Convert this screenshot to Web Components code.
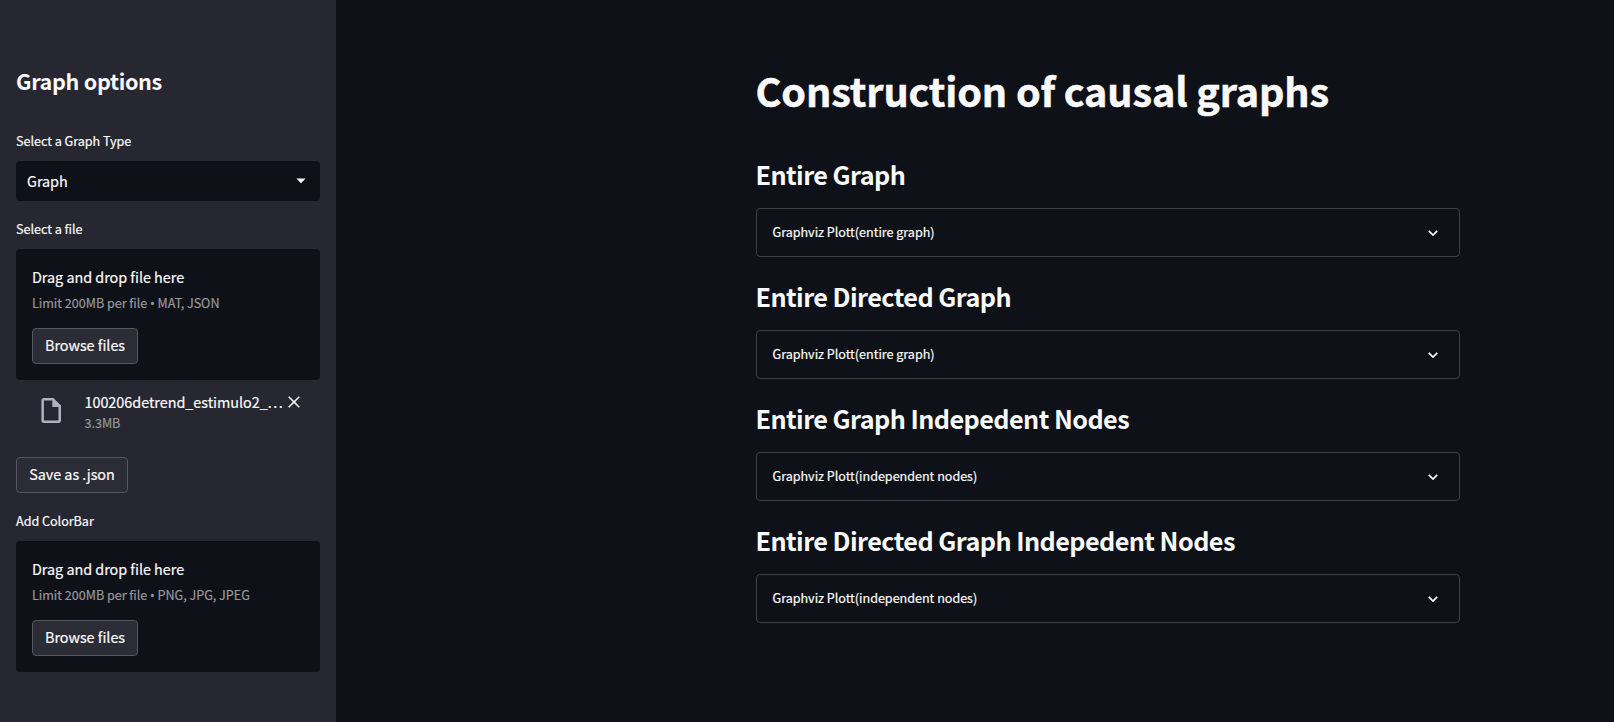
<!DOCTYPE html>
<html lang="en">
<head>
<meta charset="utf-8">
<title>Construction of causal graphs</title>
<style>
html, body { margin: 0; height: 100%; background: #0e1117; }
body { font-family: "Noto Sans CJK SC", "Noto Sans", sans-serif; color: #fafafa; overflow: hidden; letter-spacing: -0.03px; -webkit-text-stroke-width: 0.2px; }
</style>
</head>
<body>
<graph-app></graph-app>
<script>
const define = (name, html) => {
  const template = document.createElement('template');
  template.innerHTML = html;
  customElements.define(name, class extends HTMLElement {
    constructor() {
      super();
      this.attachShadow({ mode: 'open' }).append(template.content.cloneNode(true));
    }
  });
};

define('field-label', `
<style>
:host { display: block; height: 23px; margin-bottom: 9px; font-size: 12.6px; line-height: 23px; white-space: nowrap; }
</style><slot></slot>`);

define('select-box', `
<style>
:host { display: flex; align-items: center; justify-content: space-between; height: 40px; box-sizing: border-box;
  padding: 0 14px 0 11px; border-radius: 4px; background: #0e1117; font-size: 14.4px; line-height: 24px; }
svg { display: block; }
</style><span><slot></slot></span>
<svg width="10" height="6" viewBox="0 0 10 6"><path d="M0.4 0.5h9.2L5 5.3z" fill="#fafafa"/></svg>`);

define('plain-button', `
<style>
:host { display: flex; width: fit-content; }
button { all: unset; box-sizing: border-box; width: var(--w, auto); height: 36px; padding-bottom: 2px; text-align: center; border: 1px solid #55565e;
  border-radius: 4px; background: #2b2c36; color: #fafafa; font-size: 14.4px; line-height: 28px; white-space: nowrap; }
</style><button><slot></slot></button>`);

define('file-drop', `
<style>
:host { display: flex; flex-direction: column; height: 131px; box-sizing: border-box; padding: 16px; border-radius: 4px; background: #0e1117; white-space: nowrap; }
.title { font-size: 14.4px; line-height: 23px; height: 24px; }
.limit { font-size: 12.6px; line-height: 20px; height: 20px; margin: 4px 0 15px; color: #97989b; }
plain-button { --w: 106px; }
</style>
<div class="title">Drag and drop file here</div>
<div class="limit"><slot></slot></div>
<plain-button>Browse files</plain-button>`);

define('uploaded-file', `
<style>
:host { display: flex; align-items: flex-start; height: 44px; padding-left: 24px; white-space: nowrap; }
.doc { width: 20px; height: 25px; margin: 6px 24px 0 0.5px; }
.name { width: 199.5px; font-size: 14.4px; line-height: 20px; height: 21px; }
.size { font-size: 12.6px; line-height: 20px; color: #97989b; }
.close { margin: 4px 0 0 4px; }
svg { display: block; flex: none; }
</style>
<svg class="doc" viewBox="0 0 20 25"><path fill="#b0b2c3" fill-rule="evenodd" d="M3 0H12.4L20 7.6V22.2A2.6 2.6 0 0 1 17.4 25H3A2.7 2.7 0 0 1 .4 22.3V2.7A2.7 2.7 0 0 1 3 0ZM2.9 2.5V22.5H17.5V8.9H11.3V2.5Z"/></svg>
<div><div class="name"><slot></slot></div><div class="size"><slot name="size"></slot></div></div>
<svg class="close" width="12" height="12" viewBox="0 0 12 12"><path d="M.7.7 11.3 11.3M11.3.7.7 11.3" stroke="#fafafa" stroke-width="1.6"/></svg>`);

define('side-bar', `
<style>
:host { display: flex; flex-direction: column; width: 336px; box-sizing: border-box; padding: 64px 16px 0; background: #262730; flex: none; }
h2 { margin: 0 0 32px; height: 33px; font-size: 21.6px; line-height: 33px; font-weight: 600; letter-spacing: -0.32px; -webkit-text-stroke-width: 0; }
select-box { margin-bottom: 16px; }
uploaded-file { margin: 12px 0 21px; }
.save { --w: 112px; margin-bottom: 16px; }
.dot { font-family: "Noto Sans", sans-serif; }
.ellipsis { letter-spacing: 1.5px; }
</style>
<h2>Graph options</h2>
<field-label>Select a Graph Type</field-label>
<select-box>Graph</select-box>
<field-label>Select a file</field-label>
<file-drop>Limit 200MB per file <span class="dot">•</span> MAT, JSON</file-drop>
<uploaded-file>100206detrend_estimulo2_<span class="ellipsis">...</span><span slot="size">3.3MB</span></uploaded-file>
<plain-button class="save">Save as .json</plain-button>
<field-label>Add ColorBar</field-label>
<file-drop>Limit 200MB per file <span class="dot">•</span> PNG, JPG, JPEG</file-drop>`);

define('graph-section', `
<style>
:host { display: block; height: 122px; white-space: nowrap; }
h2 { margin: 0 0 0 -0.5px; height: 50px; font-size: 25.2px; line-height: 32px; font-weight: 600; letter-spacing: -0.55px; -webkit-text-stroke-width: 0; }
.expander { display: flex; align-items: center; justify-content: space-between; height: 49px; box-sizing: border-box; padding: 0 21px 0 15.5px;
  border: 1px solid #3e4044; border-radius: 4px; font-size: 12.6px; line-height: 20px; }
.text { padding-bottom: 2px; }
svg { display: block; }
</style>
<h2><slot name="heading"></slot></h2>
<div class="expander"><span class="text"><slot></slot></span>
<svg width="10" height="6" viewBox="0 0 10 6"><path d="M.8.8 5 5 9.200.8" fill="none" stroke="#fafafa" stroke-width="1.7"/></svg></div>`);

define('main-view', `
<style>
:host { display: block; width: 704px; margin-left: 420px; padding-top: 63px; }
h1 { margin: 0 0 42px -0.5px; height: 53px; font-size: 39.6px; line-height: 53px; font-weight: 700; letter-spacing: -0.13px; -webkit-text-stroke-width: 0.5px; white-space: nowrap; }
</style>
<h1>Construction of causal graphs</h1>
<graph-section><span slot="heading">Entire Graph</span>Graphviz Plott(entire graph)</graph-section>
<graph-section><span slot="heading">Entire Directed Graph</span>Graphviz Plott(entire graph)</graph-section>
<graph-section><span slot="heading">Entire Graph Indepedent Nodes</span>Graphviz Plott(independent nodes)</graph-section>
<graph-section><span slot="heading">Entire Directed Graph Indepedent Nodes</span>Graphviz Plott(independent nodes)</graph-section>`);

define('graph-app', `
<style>:host { display: flex; height: 722px; }</style>
<side-bar></side-bar><main-view></main-view>`);
</script>
</body>
</html>
